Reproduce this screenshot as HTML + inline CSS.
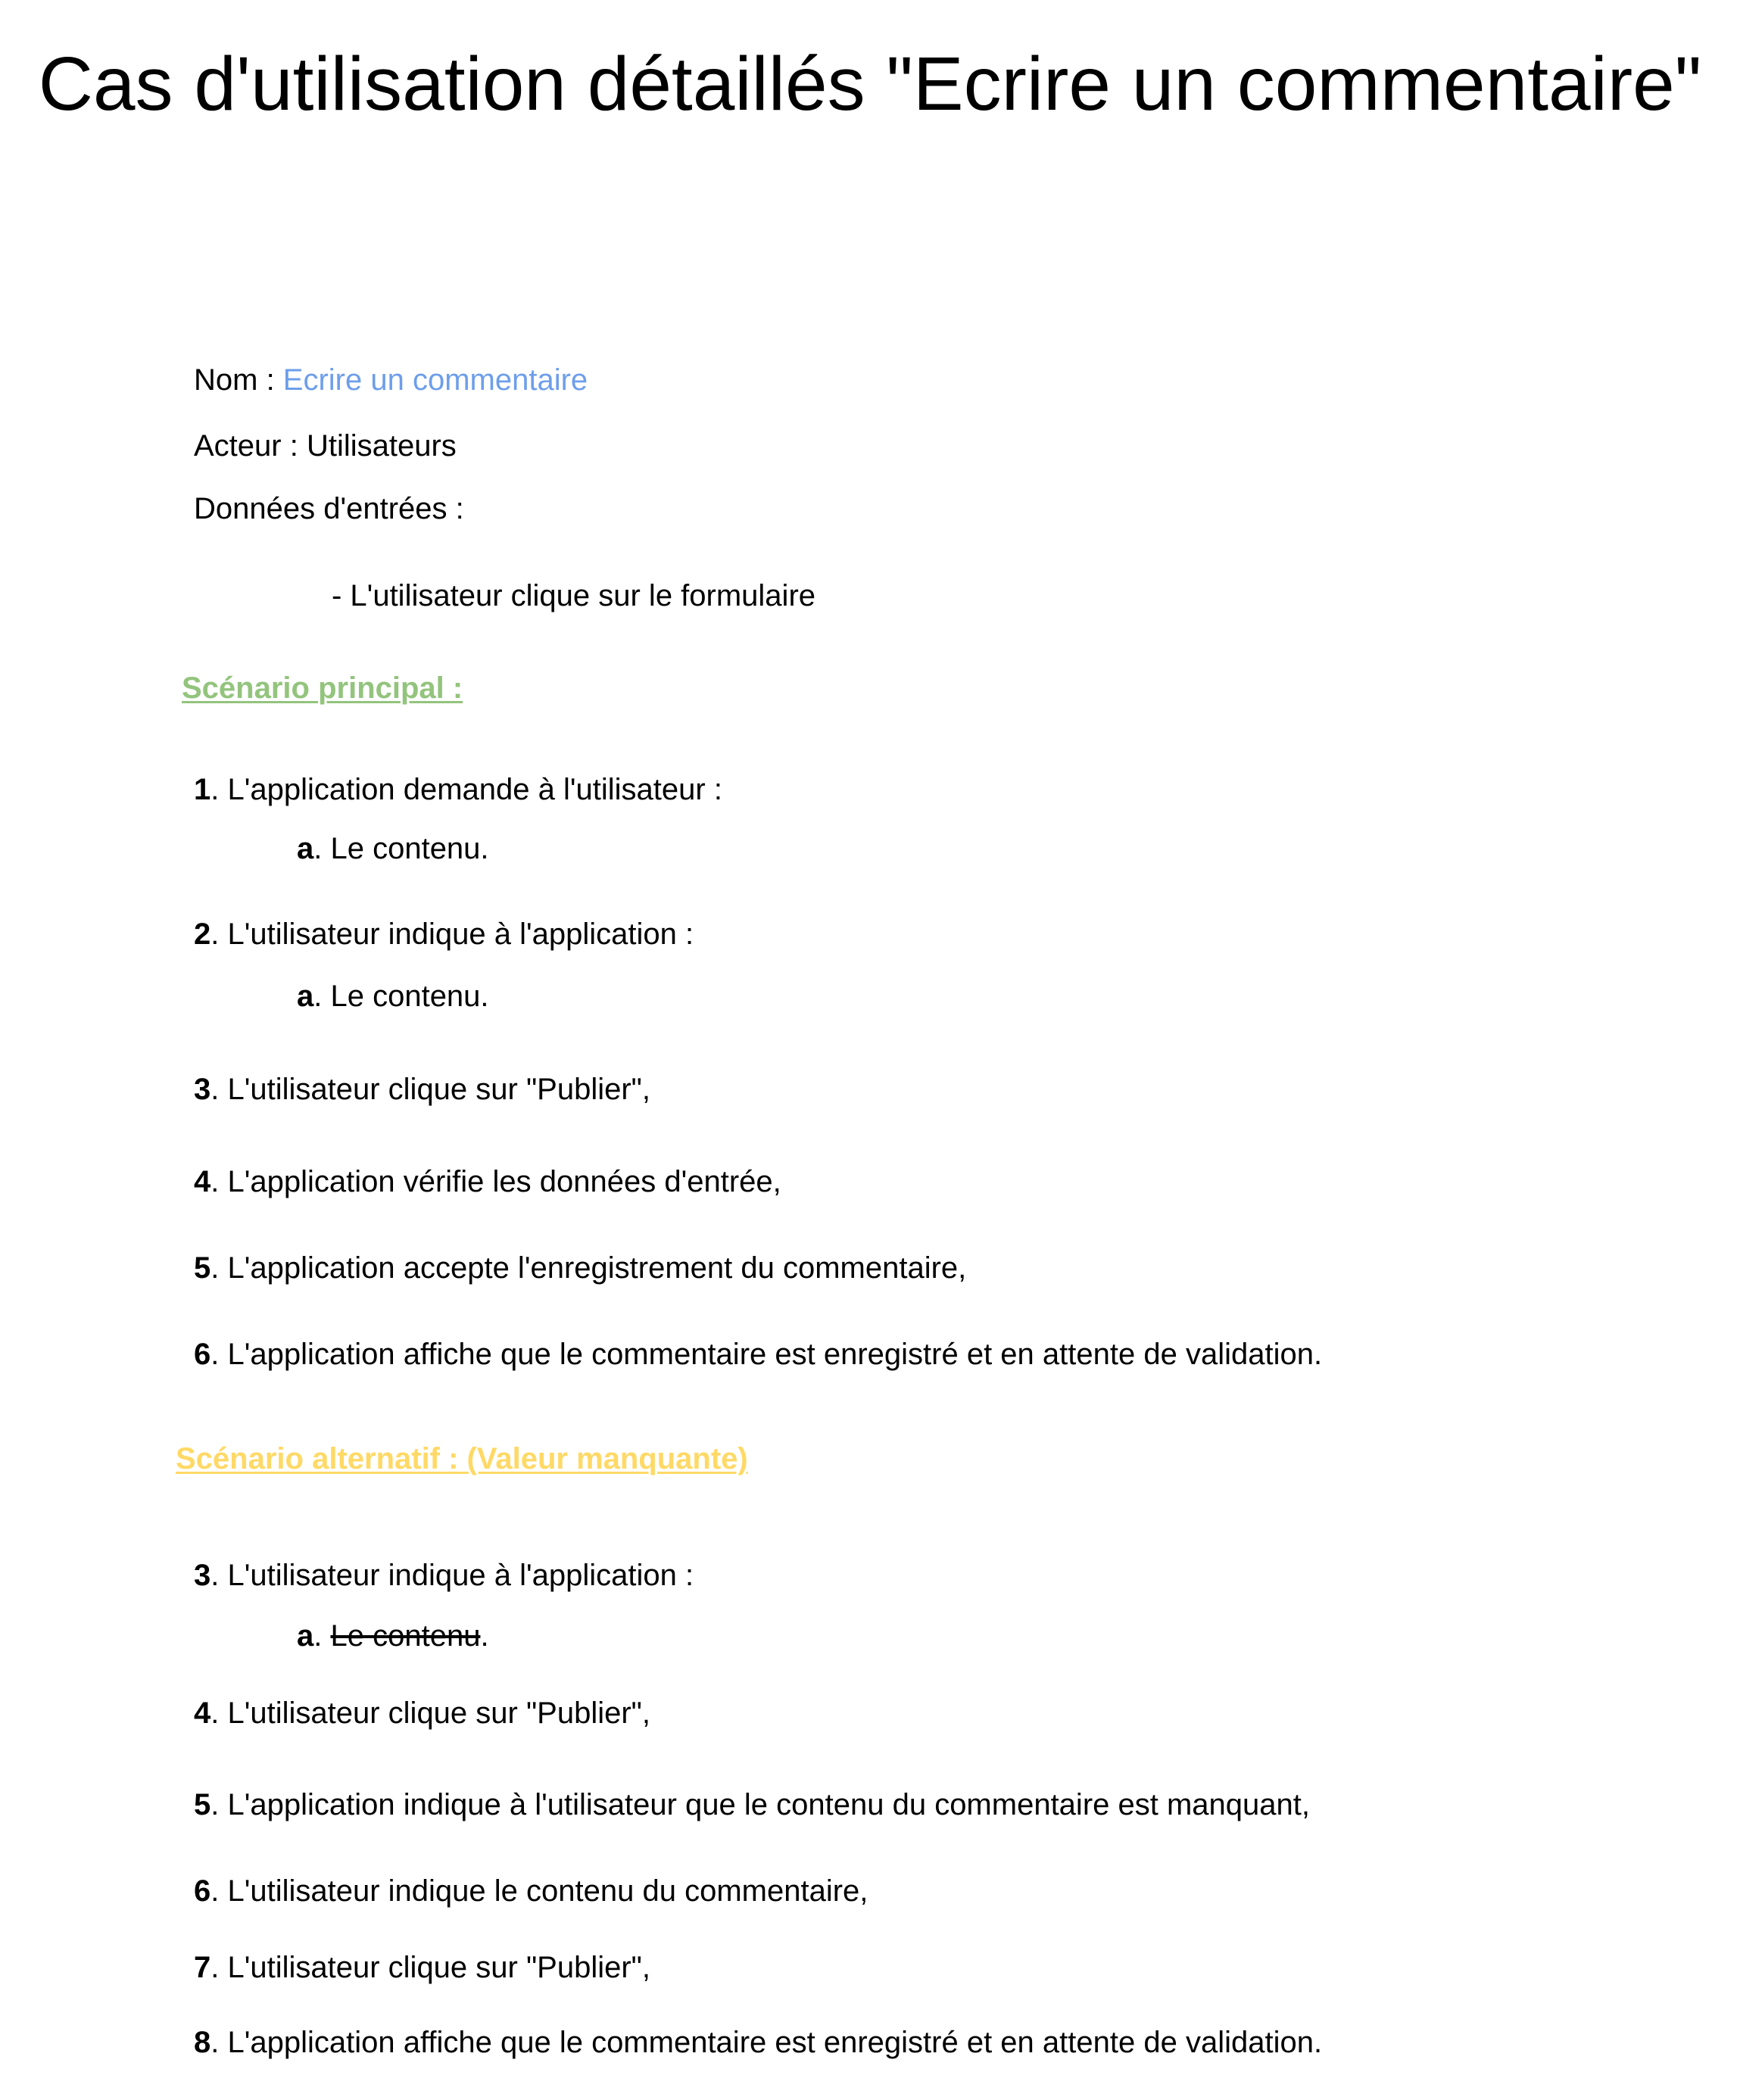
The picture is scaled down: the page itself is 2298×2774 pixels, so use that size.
<!DOCTYPE html>
<html><head><meta charset="utf-8"><style>
html,body{margin:0;padding:0;background:#fff;}
body{width:2298px;height:2774px;position:relative;overflow:hidden;font-family:"Liberation Sans",Arial,sans-serif;color:#000;}
.t{position:absolute;left:0;width:2298px;text-align:center;font-size:100px;line-height:120px;top:51px;white-space:nowrap;}
.l{position:absolute;font-size:40px;line-height:46px;white-space:nowrap;}
.h{font-weight:bold;text-decoration:underline;text-decoration-thickness:3px;text-underline-offset:4px;}
b{font-weight:bold;}
</style></head><body>
<div class="t">Cas d'utilisation détaillés "Ecrire un commentaire"</div>
<div class="l" style="left:256px;top:479px">Nom : <span style="color:#6d9eeb">Ecrire un commentaire</span></div>
<div class="l" style="left:256px;top:566px">Acteur : Utilisateurs</div>
<div class="l" style="left:256px;top:649px">Données d'entrées :</div>
<div class="l" style="left:438px;top:764px">- L'utilisateur clique sur le formulaire</div>
<div class="l h" style="left:240px;top:886px;color:#93c47d">Scénario principal :</div>
<div class="l" style="left:256px;top:1020px"><b>1</b>. L'application demande à l'utilisateur :</div>
<div class="l" style="left:392px;top:1098px"><b>a</b>. Le contenu.</div>
<div class="l" style="left:256px;top:1211px"><b>2</b>. L'utilisateur indique à l'application :</div>
<div class="l" style="left:392px;top:1293px"><b>a</b>. Le contenu.</div>
<div class="l" style="left:256px;top:1416px"><b>3</b>. L'utilisateur clique sur "Publier",</div>
<div class="l" style="left:256px;top:1538px"><b>4</b>. L'application vérifie les données d'entrée,</div>
<div class="l" style="left:256px;top:1652px"><b>5</b>. L'application accepte l'enregistrement du commentaire,</div>
<div class="l" style="left:256px;top:1766px"><b>6</b>. L'application affiche que le commentaire est enregistré et en attente de validation.</div>
<div class="l h" style="left:232px;top:1904px;color:#ffd966">Scénario alternatif : (Valeur manquante)</div>
<div class="l" style="left:256px;top:2058px"><b>3</b>. L'utilisateur indique à l'application :</div>
<div class="l" style="left:392px;top:2138px"><b>a</b>. <s>Le contenu</s>.</div>
<div class="l" style="left:256px;top:2240px"><b>4</b>. L'utilisateur clique sur "Publier",</div>
<div class="l" style="left:256px;top:2361px"><b>5</b>. L'application indique à l'utilisateur que le contenu du commentaire est manquant,</div>
<div class="l" style="left:256px;top:2475px"><b>6</b>. L'utilisateur indique le contenu du commentaire,</div>
<div class="l" style="left:256px;top:2576px"><b>7</b>. L'utilisateur clique sur "Publier",</div>
<div class="l" style="left:256px;top:2675px"><b>8</b>. L'application affiche que le commentaire est enregistré et en attente de validation.</div>
</body></html>
